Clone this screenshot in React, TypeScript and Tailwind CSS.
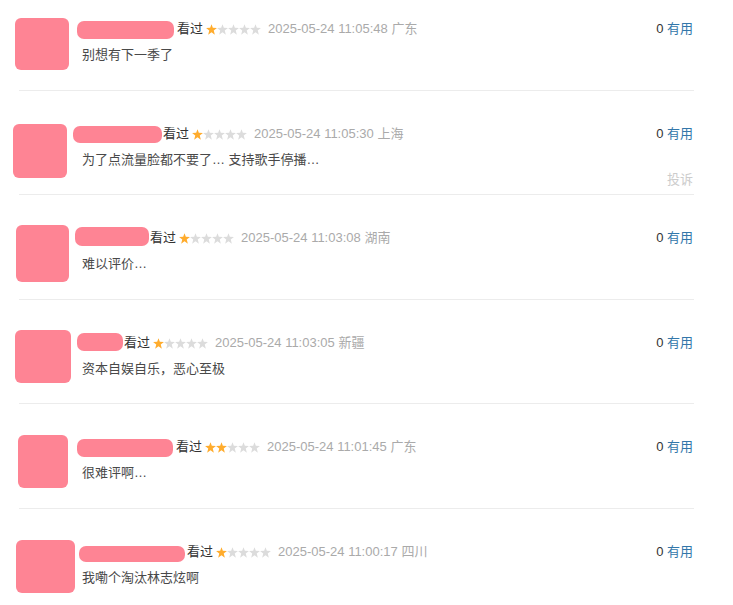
import React from "react";

type Row = {
  item: string;
  avatar: string;
  col: string;
  blur: string;
  stars: number;
  date: string;
  loc: string;
  text: string;
  report?: boolean;
};

const rows: Row[] = [
  {
    item: "pt-[19px] pb-[25px] border-b",
    avatar: "ml-[-4px] mt-[-1px] w-[54px] h-[52px]",
    col: "ml-[13px]",
    blur: "ml-[-5px] mt-[2px] w-[97px] h-[18px] mr-[3px]",
    stars: 1,
    date: "2025-05-24 11:05:48",
    loc: "广东",
    text: "别想有下一季了",
  },
  {
    item: "pt-[33px] pb-[24px] border-b",
    avatar: "ml-[-6px] mt-[0px] w-[54px] h-[54px]",
    col: "ml-[15px]",
    blur: "ml-[-9px] mt-[2px] w-[89px] h-[17px] mr-[1px]",
    stars: 1,
    date: "2025-05-24 11:05:30",
    loc: "上海",
    text: "为了点流量脸都不要了… 支持歌手停播…",
    report: true,
  },
  {
    item: "pt-[33px] pb-[25px] border-b",
    avatar: "ml-[-3px] mt-[-3px] w-[53px] h-[57px]",
    col: "ml-[13px]",
    blur: "ml-[-7px] mt-[-1px] w-[74px] h-[19px] mr-[1px]",
    stars: 1,
    date: "2025-05-24 11:03:08",
    loc: "湖南",
    text: "难以评价…",
  },
  {
    item: "pt-[33px] pb-[24px] border-b",
    avatar: "ml-[-4px] mt-[-3px] w-[56px] h-[53px]",
    col: "ml-[11px]",
    blur: "ml-[-5px] mt-[0px] w-[46px] h-[18px] mr-[1px]",
    stars: 1,
    date: "2025-05-24 11:03:05",
    loc: "新疆",
    text: "资本自娱自乐，恶心至极",
  },
  {
    item: "pt-[33px] pb-[25px] border-b",
    avatar: "ml-[-1px] mt-[-2px] w-[50px] h-[53px]",
    col: "ml-[14px]",
    blur: "ml-[-5px] mt-[2px] w-[96px] h-[18px] mr-[3px]",
    stars: 2,
    date: "2025-05-24 11:01:45",
    loc: "广东",
    text: "很难评啊…",
  },
  {
    item: "pt-[33px] pb-[25px]",
    avatar: "ml-[-3px] mt-[-2px] w-[59px] h-[53px]",
    col: "ml-[7px]",
    blur: "ml-[-3px] mt-[4px] w-[106px] h-[16px] mr-[2px]",
    stars: 1,
    date: "2025-05-24 11:00:17",
    loc: "四川",
    text: "我嘞个淘汰林志炫啊",
  },
];

function Star({ on }: { on: boolean }) {
  return (
    <svg width="11" height="11" viewBox="0 0 24 24" className="block">
      <path
        d="M12 0.5L14.9 8.3L23.8 8.8L16.9 14.3L19.3 23.2L12 18.1L4.7 23.2L7.1 14.3L0.2 8.8L9.1 8.3Z"
        fill={on ? "#FFAC2D" : "#DCDCDC"}
      />
    </svg>
  );
}

function Stars({ n }: { n: number }) {
  return (
    <div className="ml-[3px] flex h-[20px] items-center pt-[-1px]">
      {[0, 1, 2, 3, 4].map((i) => (
        <Star key={i} on={i < n} />
      ))}
    </div>
  );
}

export default function App() {
  return (
    <div className="min-h-screen bg-white pl-[19px] text-[13px] [font-family:'Liberation_Sans','Noto_Sans_CJK_SC',sans-serif]">
      {rows.map((r, idx) => (
        <div key={idx} className={`relative w-[675px] border-[#ececec] ${r.item}`}>
          <div className="flex h-[46px] items-start">
            <div className={`shrink-0 rounded-[6px] bg-[#FE8494] ${r.avatar}`} />
            <div className={`flex min-w-0 flex-1 flex-col ${r.col}`}>
              <div className="flex h-[20px] items-start leading-[20px]">
                <div className={`shrink-0 rounded-[7px] bg-[#FE8494] ${r.blur}`} />
                <span className="text-[#333333]">看过</span>
                <Stars n={r.stars} />
                <span className="ml-[7px] text-[#aaaaaa]">
                  {r.date} {r.loc}
                </span>
                <span className="ml-auto pr-[1px]">
                  <span className="text-[#333333]">0</span>{" "}
                  <span className="text-[#3377aa]">有用</span>
                </span>
              </div>
              <p className="mt-[6px] leading-[20px] text-[#494949]">{r.text}</p>
            </div>
          </div>
          {r.report && (
            <span className="absolute bottom-[4px] right-[1px] leading-[20px] text-[#cccccc]">
              投诉
            </span>
          )}
        </div>
      ))}
    </div>
  );
}
